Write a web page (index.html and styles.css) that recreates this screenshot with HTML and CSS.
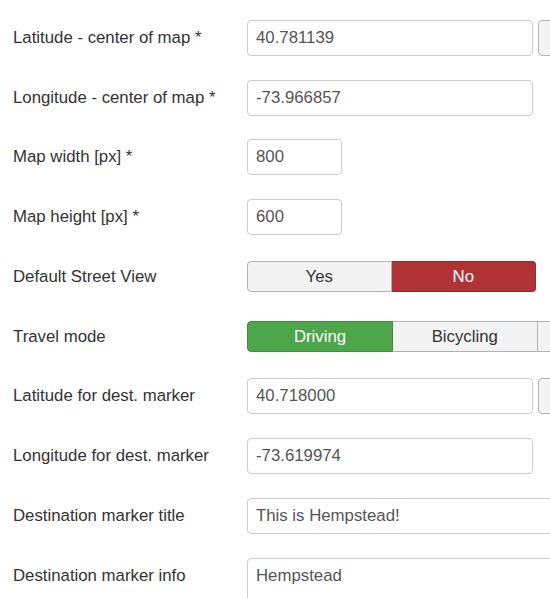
FILE: index.html
```html
<!DOCTYPE html>
<html>
<head>
<meta charset="utf-8">
<link rel="stylesheet" href="styles.css">
</head>
<body>
<form class="form">
  <div class="row">
    <label class="label">Latitude - center of map *</label>
    <div class="controls">
      <input class="input wide" type="text" value="40.781139">
      <button type="button" class="side-btn"></button>
    </div>
  </div>
  <div class="row">
    <label class="label">Longitude - center of map *</label>
    <div class="controls">
      <input class="input wide" type="text" value="-73.966857">
    </div>
  </div>
  <div class="row">
    <label class="label">Map width [px] *</label>
    <div class="controls">
      <input class="input small" type="text" value="800">
    </div>
  </div>
  <div class="row">
    <label class="label">Map height [px] *</label>
    <div class="controls">
      <input class="input small" type="text" value="600">
    </div>
  </div>
  <div class="row">
    <label class="label">Default Street View</label>
    <div class="controls">
      <div class="toggle">
        <span class="opt first">Yes</span>
        <span class="opt last danger">No</span>
      </div>
    </div>
  </div>
  <div class="row">
    <label class="label">Travel mode</label>
    <div class="controls">
      <div class="toggle">
        <span class="opt first success">Driving</span>
        <span class="opt">Bicycling</span>
        <span class="opt"></span>
      </div>
    </div>
  </div>
  <div class="row">
    <label class="label">Latitude for dest. marker</label>
    <div class="controls">
      <input class="input wide" type="text" value="40.718000">
      <button type="button" class="side-btn"></button>
    </div>
  </div>
  <div class="row">
    <label class="label">Longitude for dest. marker</label>
    <div class="controls">
      <input class="input wide" type="text" value="-73.619974">
    </div>
  </div>
  <div class="row">
    <label class="label">Destination marker title</label>
    <div class="controls">
      <input class="input xwide" type="text" value="This is Hempstead!">
    </div>
  </div>
  <div class="row top">
    <label class="label">Destination marker info</label>
    <div class="controls">
      <textarea class="input area">Hempstead</textarea>
    </div>
  </div>
</form>
</body>
</html>
```

FILE: styles.css
```css
html, body {
  margin: 0;
  padding: 0;
  overflow: hidden;
  background: #fff;
}
body {
  font-family: "Liberation Sans", Arial, sans-serif;
  font-size: 16.8px;
  color: #333;
  width: 550px;
  height: 598px;
}
.form {
  padding: 20px 0 0 13px;
  display: flex;
  flex-direction: column;
  gap: 23.74px;
}
.row {
  display: flex;
  align-items: center;
  height: 36px;
}
.row.top {
  align-items: flex-start;
}
.row.top .label {
  line-height: 36px;
}
.label {
  flex: 0 0 234px;
  white-space: nowrap;
  color: #333;
}
.controls {
  display: flex;
  gap: 5px;
  flex: 0 0 auto;
  white-space: nowrap;
}
.input {
  box-sizing: border-box;
  height: 36px;
  border: 1px solid #ccc;
  border-radius: 4px;
  padding: 0 8px;
  font-family: "Liberation Sans", Arial, sans-serif;
  font-size: 16.8px;
  color: #555;
  background: #fff;
  margin: 0;
  outline: none;
}
.input.wide { width: 286px; }
.input.small { width: 95px; }
.input.xwide { width: 360px; }
.input.area {
  width: 360px;
  height: 80px;
  padding: 6px 8px;
  resize: none;
  line-height: 22px;
}
.side-btn {
  box-sizing: border-box;
  width: 40px;
  height: 36px;
  border: 1px solid #b5b5b5;
  border-radius: 4px;
  background: #f3f3f3;
  margin: 0;
}
.toggle {
  display: flex;
  height: 31px;
}
.opt {
  box-sizing: border-box;
  width: 144.5px;
  height: 31px;
  display: flex;
  align-items: center;
  justify-content: center;
  background: #f3f3f3;
  border: 1px solid #b3b3b3;
  border-left: none;
  color: #333;
  font-size: 16.8px;
}
.opt.first {
  border-left: 1px solid #b3b3b3;
  border-radius: 4px 0 0 4px;
}
.opt.last {
  border-radius: 0 4px 4px 0;
}
.opt.danger {
  background: #b03235;
  border-color: #962a2d;
  color: #fff;
}
.opt.success {
  background: #4ea64b;
  border-color: #3d8c3a;
  color: #fff;
  width: 146px;
}
```
